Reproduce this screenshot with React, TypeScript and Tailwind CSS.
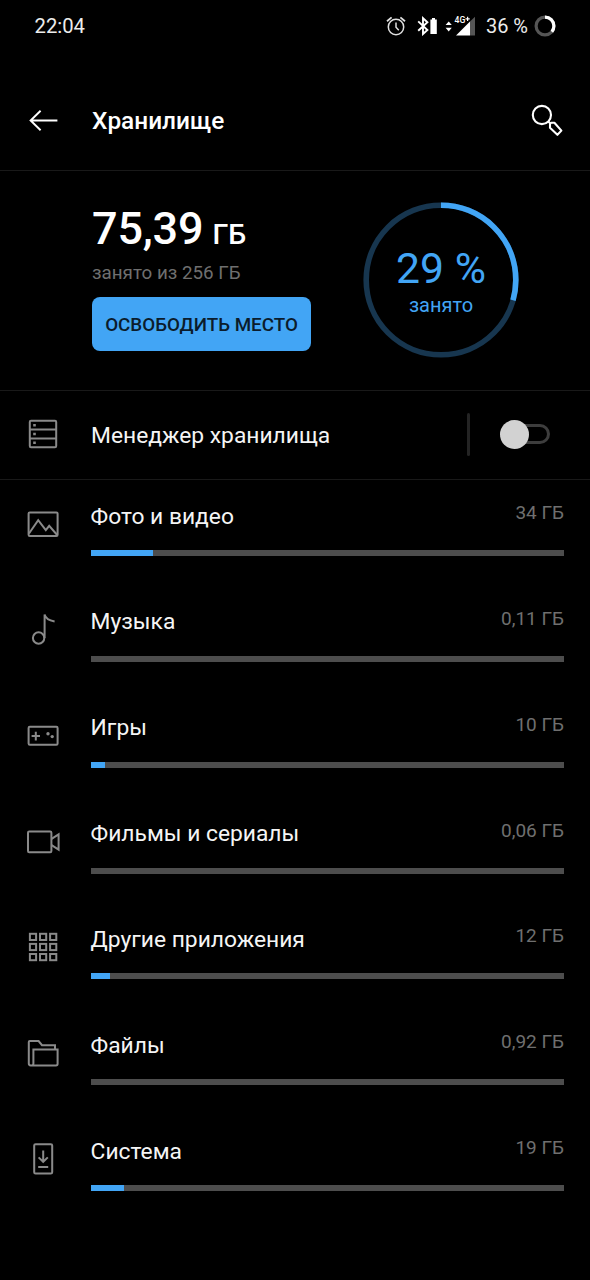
import type { ReactNode } from 'react';

interface StorageCategory {
  name: string;
  size: string;
  percent: number;
  icon: ReactNode;
}

const categories: StorageCategory[] = [
  {
    name: 'Фото и видео',
    size: '34 ГБ',
    percent: 13.1,
    icon: (
      <>
        <rect x="5.6" y="8.4" width="29" height="23.6" rx="1.2" />
        <path d="M6 29.5 L15.2 16.2 L22.8 26.2 L26.2 21.8 L34.2 31" />
      </>
    )
  },
  {
    name: 'Музыка',
    size: '0,11 ГБ',
    percent: 0,
    icon: (
      <>
        <circle cx="15.6" cy="28" r="5.7" />
        <path d="M21.6 28 V4.4 C22.4 8.6 26.4 10.6 31.6 11.4" />
      </>
    )
  },
  {
    name: 'Игры',
    size: '10 ГБ',
    percent: 3.1,
    icon: (
      <>
        <rect x="5.6" y="10.8" width="29" height="18" rx="1.2" />
        <path d="M12.8 15.8 V24.4 M8.6 20.1 H17" />
        <circle cx="25" cy="17.8" r="1.7" fill="#8a8a8a" stroke="none" />
        <circle cx="29.2" cy="20.6" r="1.7" fill="#8a8a8a" stroke="none" />
      </>
    )
  },
  {
    name: 'Фильмы и сериалы',
    size: '0,06 ГБ',
    percent: 0,
    icon: (
      <>
        <rect x="5" y="9.6" width="23.4" height="20.6" rx="1.2" />
        <path d="M28.6 16.8 L35.6 12.4 V27.6 L28.6 23.2" />
      </>
    )
  },
  {
    name: 'Другие приложения',
    size: '12 ГБ',
    percent: 4.1,
    icon: (
      <>
        {[6.8, 16.9, 27].map((y) =>
          [6.9, 17, 27.1].map((x) => (
            <rect key={`${x}-${y}`} x={x} y={y} width="6.2" height="6.2" />
          ))
        )}
      </>
    )
  },
  {
    name: 'Файлы',
    size: '0,92 ГБ',
    percent: 0,
    icon: (
      <>
        <path d="M32 15.6 V12.2 H19 L15.6 8 H6.8 Q5.8 8 5.8 9 V30.6 Q5.8 32.4 7.6 32.4 H33 Q34.6 32.4 34.6 30.8 V16.4 H10.4 V30.4 Q10.4 32.4 8.6 32.4" />
      </>
    )
  },
  {
    name: 'Система',
    size: '19 ГБ',
    percent: 7,
    icon: (
      <>
        <rect x="11.2" y="5.2" width="18" height="29.4" rx="1.4" />
        <path d="M20.2 11.4 V22.6 M15.6 18.4 L20.2 22.8 L24.8 18.4 M15.2 28 H25.2" />
      </>
    )
  }
];

const ListIcon = ({ children }: { children: ReactNode }) => (
  <svg
    width="40"
    height="40"
    viewBox="0 0 40 40"
    fill="none"
    stroke="#8a8a8a"
    strokeWidth="2"
    className="shrink-0"
  >
    {children}
  </svg>
);

const StatusBar = () => (
  <div className="flex h-[53px] items-center justify-between pr-[33px] pl-[34.5px] text-[20px] text-[#ececec]">
    <span className="text-[20.3px]">22:04</span>
    <div className="flex items-center pb-px">
      <svg width="20" height="20" viewBox="0 0 20 20" fill="none" stroke="#e0e0e0" strokeWidth="1.5">
        <circle cx="10" cy="11" r="7.7" />
        <path d="M10 6.4 V11.2 L12.8 14.2" />
        <path d="M1 5.2 L5.6 1.4 M19 5.2 L14.4 1.4" strokeWidth="1.8" />
      </svg>
      <svg width="24" height="20" viewBox="0 0 24 20" className="ml-[9px]">
        <path
          d="M3.2 5.4 L12.4 14 L8 18 V2.2 L12.4 6.2 L3.2 14.8"
          fill="none"
          stroke="#fff"
          strokeWidth="1.9"
        />
        <path d="M15.4 3.4 H17 V2 H20 V3.4 H21.8 V18 H15.4 Z" fill="#fff" />
      </svg>
      <svg width="31" height="20" viewBox="0 0 31 20" className="ml-[6px]">
        <path d="M0.6 9 L3.7 5.4 L6.8 9 Z M0.6 11.8 L3.7 15.4 L6.8 11.8 Z" fill="#fff" />
        <path d="M25 5.4 L30 0.8 V19.4 H25 Z" fill="#555" />
        <path d="M11 19.4 L25 5.4 V19.4 Z" fill="#fff" />
        <text x="9.6" y="7.4" fill="#fff" stroke="#000" strokeWidth="1.4" paintOrder="stroke" fontSize="8.6" fontWeight="500">
          4G
        </text>
        <path d="M22.6 0.8 V5 M20.5 2.9 H24.7" stroke="#fff" strokeWidth="1.2" />
      </svg>
      <span className="ml-[10px]">36 %</span>
      <svg width="24" height="24" viewBox="0 0 24 24" fill="none" strokeWidth="3.2" className="ml-[5px]">
        <circle cx="12" cy="12" r="8.9" stroke="#555" />
        <circle
          cx="12"
          cy="12"
          r="8.9"
          stroke="#fff"
          pathLength="100"
          strokeDasharray="36 100"
          transform="rotate(-90 12 12)"
        />
      </svg>
    </div>
  </div>
);

const Header = () => (
  <header className="flex h-[118px] items-center border-b border-[#191919] pt-[18px] pr-[24px] pl-[27px]">
    <svg width="32" height="24" viewBox="0 0 32 24" fill="none" stroke="#fff" strokeWidth="1.9">
      <path d="M30.4 11.5 H3.6 M13.6 1.7 L3.6 11.5 L13.6 21.3" />
    </svg>
    <h1 className="ml-[33px] flex-1 pt-[2px] text-[24.4px] font-medium text-white">Хранилище</h1>
    <svg width="36" height="36" viewBox="0 0 36 36" fill="none" stroke="#fff" strokeWidth="2.1">
      <circle cx="11.9" cy="12" r="9.1" />
      <path d="M18.4 18.5 L20.6 20.7" />
      <path d="M20 24.8 V21.4 Q20.2 20 21.4 19.8 H24.4 L31.4 27.6 L27.4 31.8 Z" strokeLinejoin="round" />
    </svg>
  </header>
);

const Summary = () => (
  <section className="flex h-[220px] items-start justify-between border-b border-[#191919] pr-[69px] pl-[92px]">
    <div className="pt-[32px]">
      <p className="flex h-[52px] items-baseline leading-[52px] font-medium text-white">
        <span className="text-[45px] tracking-[-0.2px]">75,39</span>
        <span className="ml-[9px] text-[28.5px]">ГБ</span>
      </p>
      <p className="mt-[6px] text-[18.8px] leading-[24px] text-[#6f6f6f]">занято из 256 ГБ</p>
      <button className="mt-[12px] h-[54px] w-[219px] rounded-[8px] bg-[#42a5f5] pt-[3px] text-[18.8px] font-medium whitespace-nowrap text-[#0b1c2c]">
        ОСВОБОДИТЬ МЕСТО
      </button>
    </div>

    <div className="mt-[29px] grid h-[160px] w-[160px] place-items-center">
      <svg
        width="160"
        height="160"
        viewBox="0 0 160 160"
        fill="none"
        strokeWidth="5.6"
        className="col-start-1 row-start-1"
      >
        <circle cx="80" cy="80" r="74.8" stroke="#17364f" />
        <circle
          cx="80"
          cy="80"
          r="74.8"
          stroke="#42a5f5"
          pathLength="100"
          strokeDasharray="29.4 100"
          transform="rotate(-90 80 80)"
        />
      </svg>
      <div className="col-start-1 row-start-1 pt-[4px] text-center text-[#42a5f5]">
        <p className="text-[42.7px] leading-[46px]">29 %</p>
        <p className="text-[20px] leading-[28px]">занято</p>
      </div>
    </div>
  </section>
);

const StorageManager = () => (
  <section className="flex h-[89px] items-center border-b border-[#191919] pr-[40px] pb-[2px] pl-[23px]">
    <ListIcon>
      <rect x="6.8" y="6.8" width="26.4" height="26.4" rx="1.2" />
      <path d="M6.8 15.6 H33.2 M6.8 24.4 H33.2" />
      <path d="M10.2 11.2 H12.8 M10.2 20 H12.8 M10.2 28.8 H12.8" strokeWidth="2.6" />
    </ListIcon>
    <span className="ml-[28px] flex-1 pt-[4px] text-[22.8px] text-[#f5f5f5]">Менеджер хранилища</span>
    <span className="h-[43px] w-[3px] rounded-full bg-[#242424]" />
    <button role="switch" aria-checked="false" className="ml-[30px] flex items-center">
      <span className="z-10 h-[29px] w-[29px] rounded-full bg-[#d2d2d2]" />
      <span className="-ml-[22px] h-[20px] w-[43px] rounded-full border-[3px] border-[#3d3d3d]" />
    </button>
  </section>
);

const CategoryRow = ({ name, size, percent, icon }: StorageCategory) => (
  <li className="flex h-[105.85px] items-start pr-[26px] pl-[23px]">
    <div className="pt-[24px]">
      <ListIcon>{icon}</ListIcon>
    </div>
    <div className="ml-[27.6px] flex-1 pt-[20px]">
      <div className="flex h-[50px] items-start justify-between">
        <span className="pt-[0.5px] text-[22.8px] leading-[32px] text-[#f5f5f5]">{name}</span>
        <span className="text-[19px] leading-[26px] text-[#6f6f6f]">{size}</span>
      </div>
      <div className="h-[6px] bg-[#4d4d4d]">
        <div className="h-full bg-[#42a5f5]" style={{ width: `${percent}%` }} />
      </div>
    </div>
  </li>
);

export default function App() {
  return (
    <div className="h-[1280px] w-[590px] overflow-hidden bg-black font-['Roboto',sans-serif]">
      <StatusBar />
      <Header />
      <Summary />
      <StorageManager />
      <ul>
        {categories.map((category) => (
          <CategoryRow key={category.name} {...category} />
        ))}
      </ul>
    </div>
  );
}
